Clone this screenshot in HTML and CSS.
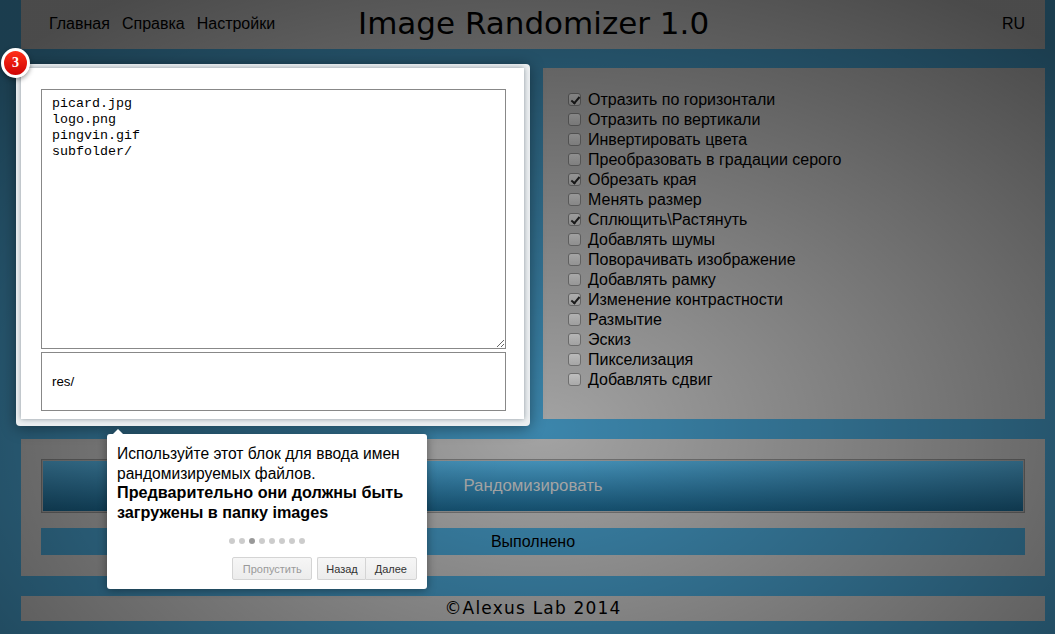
FILE: index.html
```html
<!DOCTYPE html>
<html lang="ru">
<head>
    <meta charset="UTF-8">
    <meta name="viewport" content="width=device-width, initial-scale=1.0">
    <title>Image Randomizer 1.0</title>
    <link rel="stylesheet" href="styles.css">
</head>
<body>
<div class="page">
    <header class="top panel">
        <nav class="menu">
            <a href="#">Главная</a>
            <a href="#">Справка</a>
            <a href="#">Настройки</a>
        </nav>
        <h1>Image Randomizer 1.0</h1>
        <a class="lang" href="#">RU</a>
    </header>

    <div class="work">
        <div class="files">
            <span class="step">3</span>
            <textarea class="names" spellcheck="false">picard.jpg
logo.png
pingvin.gif
subfolder/</textarea>
            <input class="folder" type="text" value="res/">
        </div>
        <div class="options panel">
            <label><input type="checkbox" checked>Отразить по горизонтали</label>
            <label><input type="checkbox">Отразить по вертикали</label>
            <label><input type="checkbox">Инвертировать цвета</label>
            <label><input type="checkbox">Преобразовать в градации серого</label>
            <label><input type="checkbox" checked>Обрезать края</label>
            <label><input type="checkbox">Менять размер</label>
            <label><input type="checkbox" checked>Сплющить\Растянуть</label>
            <label><input type="checkbox">Добавлять шумы</label>
            <label><input type="checkbox">Поворачивать изображение</label>
            <label><input type="checkbox">Добавлять рамку</label>
            <label><input type="checkbox" checked>Изменение контрастности</label>
            <label><input type="checkbox">Размытие</label>
            <label><input type="checkbox">Эскиз</label>
            <label><input type="checkbox">Пикселизация</label>
            <label><input type="checkbox">Добавлять сдвиг</label>
        </div>
    </div>

    <div class="run panel">
        <button class="go" type="button">Рандомизировать</button>
        <div class="status">Выполнено</div>
    </div>

    <footer class="bottom panel">©Alexus Lab 2014</footer>
</div>

<div class="overlay"></div>

<div class="tip">
    <p>Используйте этот блок для ввода имен рандомизируемых файлов.<br><b>Предварительно они должны быть загружены в папку images</b></p>
    <div class="dots">
        <span></span><span></span><span class="on"></span><span></span><span></span><span></span><span></span><span></span>
    </div>
    <div class="tip-buttons">
        <a class="btn skip" href="#">Пропустить</a>
        <div class="pair">
            <a class="btn back" href="#">Назад</a>
            <a class="btn" href="#">Далее</a>
        </div>
    </div>
</div>
</body>
</html>
```

FILE: styles.css
```css
html, body { height: 100%; }
body { margin: 0; background-color: #3f8db5; font-family: "Liberation Sans", Arial, sans-serif; font-size: 16px; color: #000; overflow: hidden; }
a { color: inherit; text-decoration: none; }

.page { width: 1024px; margin-left: 21px; }
.panel { background-color: #acacac; }

.top { height: 49px; display: flex; align-items: center; padding: 0 20px 1px 28px; box-sizing: border-box; }
.menu { width: 309px; display: flex; gap: 12px; }
.top h1 { margin: 0 0 2px; font-family: "DejaVu Sans", sans-serif; font-weight: normal; font-size: 31px; white-space: nowrap; }
.lang { margin-left: auto; }

.work { display: flex; gap: 19px; margin-top: 19px; height: 351px; }
.files { position: relative; z-index: 20; width: 503px; box-sizing: border-box; padding: 21px 18px 8px 20px; background-color: #fff; display: flex; flex-direction: column; gap: 3px; }
.files::before { content: ""; position: absolute; z-index: -1; top: -4px; right: -6px; bottom: -7px; left: -5px; background-color: #eceff1; border-radius: 4px; box-shadow: 0 2px 15px rgba(0,0,0,.4); }
.files::after { content: ""; position: absolute; z-index: -1; inset: 0; background-color: #fff; box-shadow: 0 0 5px rgba(60,80,90,.55); }
.names { display: block; height: 260px; box-sizing: border-box; padding: 6px 10px; border: 1px solid #888; font-family: "Liberation Mono", "Courier New", monospace; font-size: 13.33px; line-height: 16px; outline: none; overflow: hidden; }
.folder { display: block; height: 59px; box-sizing: border-box; padding: 0 10px; border: 1px solid #888; font-family: "Liberation Sans", Arial, sans-serif; font-size: 13.33px; outline: none; }
.step { position: absolute; top: -20px; left: -20px; width: 23px; height: 24px; border: 3px solid #fff; border-radius: 50%; background: linear-gradient(#ff3019, #cf0404); box-shadow: 0 2px 5px rgba(0,0,0,.4); color: #fff; font: bold 14px/24px "Liberation Serif", serif; text-align: center; }

.options { flex: 1; box-sizing: border-box; padding: 22px 25px; }
.options label { display: flex; align-items: center; height: 20px; }
.options input { appearance: none; position: relative; width: 13px; height: 13px; margin: 0 7px 2px 0; border: 1px solid #7c7c7c; border-radius: 3px; background: linear-gradient(#d6d6d6, #bcbcbc); box-sizing: border-box; }
.options input:checked::after { content: ""; position: absolute; left: 3.5px; top: 1px; width: 3px; height: 7px; border: solid #222; border-width: 0 2px 2px 0; transform: rotate(40deg); }

.run { margin-top: 20px; height: 137px; box-sizing: border-box; padding: 20px 20px 0; }
.go { display: block; width: 100%; height: 54px; border: 2px solid #9a9a9a; outline: 1px solid #7a7a7a; outline-offset: -1px; background: linear-gradient(#4a9cc6, #17597c); color: #b8b8b8; font: 16.8px "Liberation Sans", Arial, sans-serif; }
.status { margin-top: 15px; height: 27px; line-height: 27px; text-align: center; background-color: #3f8db5; }

.bottom { margin-top: 20px; height: 25px; line-height: 25px; text-align: center; font-family: "DejaVu Sans", sans-serif; font-size: 17px; letter-spacing: 1.2px; }

.overlay { position: absolute; z-index: 10; inset: 0; background: radial-gradient(ellipse 780px 510px at 540px 430px, rgba(0,0,0,.05) 0, rgba(0,0,0,.57) 100%); }

.tip { position: absolute; z-index: 30; left: 107px; top: 434px; width: 320px; height: 155px; box-sizing: border-box; padding: 10px; background-color: #fff; border-radius: 3px; box-shadow: 0 1px 10px rgba(0,0,0,.4); font-size: 15.6px; line-height: 19.7px; }
.tip::before { content: ""; position: absolute; top: -10px; left: 6px; border: 5px solid transparent; border-bottom-color: #fff; }
.tip p { margin: 0; }
.tip b { font-size: 16.2px; }
.dots { display: flex; justify-content: center; gap: 4px; margin-top: 15px; }
.dots span { width: 6px; height: 6px; border-radius: 50%; background-color: #ccc; }
.dots .on { background-color: #999; }
.tip-buttons { position: absolute; right: 10px; bottom: 9px; display: flex; gap: 5px; }
.pair { display: flex; }
.btn { display: block; height: 23px; line-height: 22px; box-sizing: border-box; padding: 0 9px; border: 1px solid #d4d4d4; background: linear-gradient(#f6f6f6, #ececec); border-radius: 2px; font-size: 11px; color: #333; }
.pair .btn:first-child { border-radius: 2px 0 0 2px; border-right-width: 0; }
.pair .btn:last-child { border-radius: 0 2px 2px 0; }
.pair .back { padding: 0 7px 0 8px; }
.skip { color: #9a9a9a; padding: 0 9.5px; }
```
